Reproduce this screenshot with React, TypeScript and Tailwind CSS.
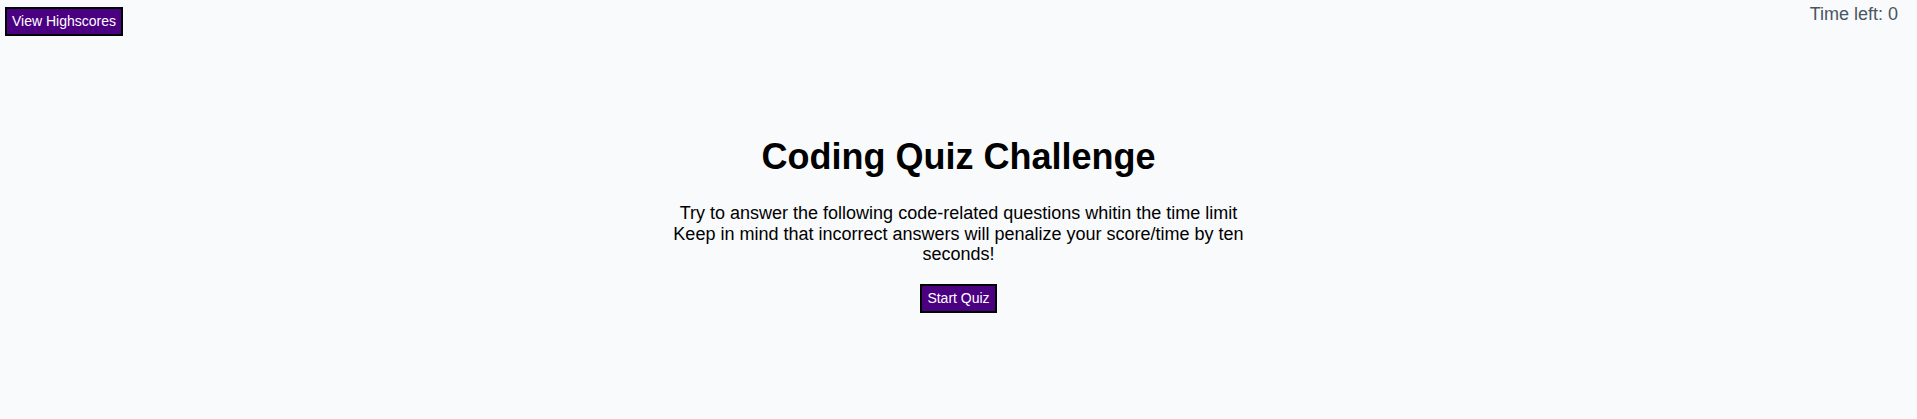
import React from "react";

export default function App() {
  return (
    <div className="min-h-screen bg-[#f8fafc] font-['Liberation_Sans',Arial,sans-serif] text-black">
      <header className="flex items-start justify-between">
        <button className="ml-[5px] mt-[7px] border-2 border-black bg-[#4b0082] px-[5px] text-[14px] leading-[25px] text-white">
          View Highscores
        </button>
        <p className="mr-[19px] mt-[4px] text-[18px] leading-[21px] text-[#4b5563]">
          Time left: 0
        </p>
      </header>
      <main className="mt-[101px] flex flex-col items-center">
        <h1 className="text-[36px] font-bold leading-[40px]">
          Coding Quiz Challenge
        </h1>
        <p className="mt-[26px] w-[600px] text-center text-[18px] leading-[20.7px]">
          Try to answer the following code-related questions whitin the time
          limit
          <br />
          Keep in mind that incorrect answers will penalize your score/time by
          ten seconds!
        </p>
        <button className="mt-[19px] border-2 border-black bg-[#4b0082] px-[5px] text-[14px] leading-[25px] text-white">
          Start Quiz
        </button>
      </main>
    </div>
  );
}
